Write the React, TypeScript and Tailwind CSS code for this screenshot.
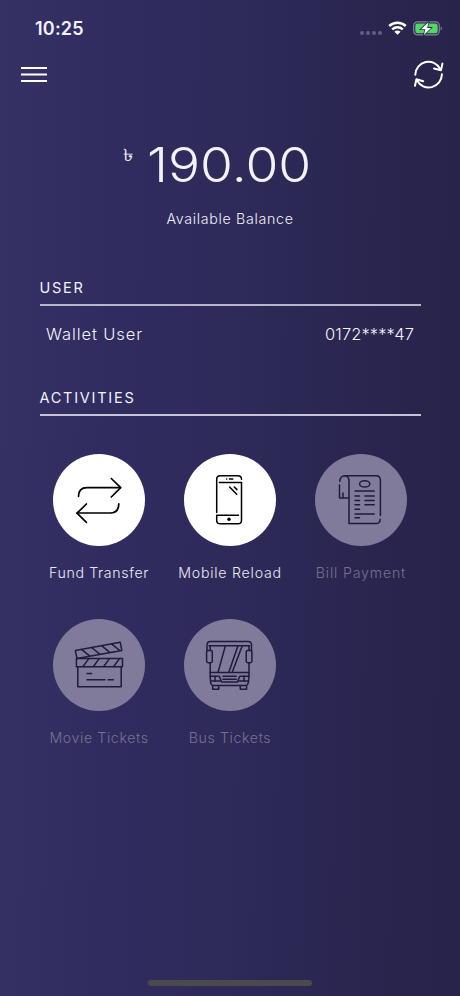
import type { ReactNode } from 'react'

interface Activity {
  label: string
  icon: ReactNode
  disabled?: boolean
  labelClass: string
}

function MenuIcon() {
  return (
    <svg className="w-[26px] h-[16px]" viewBox="0 0 26 16" stroke="white" strokeWidth={2}>
      <path d="M0 2H26M0 8.4H26M0 14.9H26" />
    </svg>
  )
}

function RefreshIcon() {
  return (
    <svg
      className="w-[30px] h-[30px]"
      viewBox="0 0 30 30"
      fill="none"
      stroke="white"
      strokeWidth={2}
      strokeLinecap="round"
      strokeLinejoin="round"
    >
      <path d="M1.3 14.7A13.2 13.2 0 0 1 26.4 9.2" />
      <path d="M27.9 14.3A13.2 13.2 0 0 1 3 20.4" />
      <path d="M20 8.5L27 10.2L28.4 3.6" />
      <path d="M1 25.8L2.4 19.2L9.2 21.2" />
    </svg>
  )
}

function WifiIcon() {
  return (
    <svg className="w-[19px] h-[14px]" viewBox="0 0 19 14" fill="none" stroke="white" strokeWidth={2.5}>
      <path d="M1.2 5C5.9 .7 13.1 .7 17.8 5" />
      <path d="M4.2 8.4C7.2 5.6 11.8 5.6 14.8 8.4" />
      <path d="M9.5 13.8L6.4 10.8C8.1 9.2 10.9 9.2 12.6 10.8Z" fill="white" stroke="none" />
    </svg>
  )
}

function BatteryIcon() {
  return (
    <svg className="w-[30px] h-[16px]" viewBox="0 0 30 16">
      <rect x="0.7" y="1.9" width="25.6" height="13" rx="3.8" fill="none" stroke="#85829c" strokeWidth={1.2} />
      <rect x="2.3" y="3.5" width="22.4" height="9.8" rx="2.2" fill="#4fd964" />
      <path d="M27.7 6.2C29.4 6.9 29.4 9.9 27.7 10.6Z" fill="#85829c" />
      <path
        d="M15.5 2.2L8 9.2H12.3L10.9 15L18 7.9H14.2Z"
        fill="white"
        stroke="#2b2756"
        strokeWidth={1.6}
        paintOrder="stroke"
      />
    </svg>
  )
}

function TransferIcon() {
  return (
    <svg className="size-[92px]" viewBox="0 0 92 92" fill="none" stroke="black" strokeWidth={1.7} strokeLinecap="round" strokeLinejoin="round">
      <path d="M25.5 42.3C25.5 36.5 29 33.6 34 33.6H67.5" />
      <path d="M58.3 24.5L67.7 33.7L58.3 43" />
      <path d="M65.8 49.8C65.8 55.6 62.6 59 57 59H24" />
      <path d="M33.4 50L24 59.2L33.4 68.3" />
    </svg>
  )
}

function PhoneIcon() {
  return (
    <svg className="size-[92px]" viewBox="0 0 92 92" fill="none" stroke="black" strokeWidth={1.5} strokeLinecap="round" strokeLinejoin="round">
      <path d="M32.7 58.5V25.3Q32.7 21.7 36.3 21.7H53.9Q57.5 21.7 57.5 25.3M57.5 28.6V66.2Q57.5 69.8 53.9 69.8H36.3Q32.7 69.8 32.7 66.2V61.3H54.5" />
      <path d="M35.3 28.5H57.5" />
      <path d="M45.5 25H48.8M42.6 25H42.7" />
      <path d="M45.6 33L52.7 40.2M50.3 33L53 35.6" />
      <circle cx="45" cy="65.2" r="1.7" fill="black" stroke="none" />
    </svg>
  )
}

function BillIcon() {
  return (
    <svg className="size-[92px]" viewBox="0 0 92 92" fill="none" stroke="#1f1b3c" strokeWidth={1.5} strokeLinecap="round" strokeLinejoin="round">
      <path d="M24.8 27.5C25 23.8 26.9 21.7 29.8 21.7H61Q65.4 21.7 65.4 26.1V61.5" />
      <path d="M29.8 21.7C32.6 21.7 34 24 34 27.5V69.6H61Q65.1 69.6 65.1 65.2" />
      <path d="M24.5 31V44H33.6M28 39V43.7" />
      <ellipse cx="49.7" cy="29.9" rx="5.1" ry="3.1" />
      <path d="M40 36.9H59.2" />
      <path d="M40 42H44.5M50 42H59.2M40 46.4H44.5M50 46.4H59.2M40 50.8H44.5M50 50.8H59.2M40 55.2H44.5" />
      <path d="M40 60H59.2M40 63.7H44.5" />
    </svg>
  )
}

function MovieIcon() {
  return (
    <svg className="size-[92px]" viewBox="0 0 92 92" fill="none" stroke="#1f1b3c" strokeWidth={1.5} strokeLinejoin="round">
      <path d="M22.3 31.4L67.2 23.2L68.8 31.4L24 39.6Z" />
      <path d="M28.5 30.4L36.8 37.1M38.5 28.5L46.8 35.2M48.5 26.7L56.8 33.4M58.5 24.8L66.8 31.5" />
      <path d="M23.4 39.6H69.5V47.7H23.4Z" />
      <path d="M29.8 47.7L35.8 39.6M40.2 47.7L46.2 39.6M50.5 47.7L56.5 39.6M60.5 47.7L66.5 39.6" />
      <path d="M24.8 47.7V67.8H68.2V47.7" />
      <path d="M33.5 54.6H39.2M33.5 60.7H52.5M54.5 60.7H60.8" />
    </svg>
  )
}

function BusIcon() {
  return (
    <svg className="size-[92px]" viewBox="0 0 92 92" fill="none" stroke="#1f1b3c" strokeWidth={1.5} strokeLinejoin="round" strokeLinecap="round">
      <path d="M23 31.5V26Q23 22.5 26.5 22.5H64Q67.5 22.5 67.5 26V31.5M25 26.8H65.5" />
      <rect x="22.6" y="31.5" width="5.7" height="12.2" rx="1.6" />
      <rect x="62.2" y="31.5" width="5.7" height="12.2" rx="1.6" />
      <path d="M26.2 27V31M26.2 44V57.5L26.6 63Q26.8 66.6 30 66.6H61Q64 66.6 64.4 63L65 57.5V44M65 27V31" />
      <path d="M26.2 53.4H65M26.2 57.2H35.4L37.5 62.9H53.5L55.7 57.2H65M26.6 62H36.8M54 62H64.5" />
      <path d="M31 57.2V62M60 57.2V62M39 57.3H52.2M39 60.2H52.2" />
      <path d="M41.2 27.4L34.2 52.8M53.7 27.4L45 52.8M58 27.4L48.4 52.8" />
      <path d="M28.7 66.8V70.2H34.7V66.8M56.3 66.8V70.2H62.6V66.8" />
    </svg>
  )
}

const activities: Activity[] = [
  { label: 'Fund Transfer', icon: <TransferIcon />, labelClass: 'tracking-[0.65px]' },
  { label: 'Mobile Reload', icon: <PhoneIcon />, labelClass: 'tracking-[0.75px]' },
  { label: 'Bill Payment', icon: <BillIcon />, labelClass: 'tracking-[0.8px]', disabled: true },
  { label: 'Movie Tickets', icon: <MovieIcon />, labelClass: 'tracking-[0.6px]', disabled: true },
  { label: 'Bus Tickets', icon: <BusIcon />, labelClass: 'tracking-[0.6px]', disabled: true },
]

function ActivityButton({ label, icon, disabled, labelClass }: Activity) {
  return (
    <button className="flex flex-col items-center h-[165px]" disabled={disabled}>
      <span className={`size-[92px] rounded-full ${disabled ? 'bg-[#807b9b]' : 'bg-white'}`}>{icon}</span>
      <span
        className={`mt-[17px] text-[14.2px] leading-5 whitespace-nowrap ${labelClass} ${
          disabled ? 'text-[#77728f]' : 'text-[#eceaf6]'
        }`}
      >
        {label}
      </span>
    </button>
  )
}

export default function App() {
  return (
    <div className="w-[460px] h-[996px] overflow-hidden flex flex-col bg-[linear-gradient(91deg,#353165_0%,#312c60_25%,#2d2957_58%,#28244c_88%,#27234a_100%)] text-[#f3f1fb] font-['Inter','Liberation_Sans',sans-serif] font-[350]">
      {/* Status bar */}
      <div className="h-[52px] pt-[18px] pl-[35px] pr-[17.5px] flex justify-between items-start">
        <span className="text-[18px] leading-[22px] font-semibold tracking-[0.2px]">10:25</span>
        <div className="flex items-start pt-[2px]">
          <div className="flex gap-[2px] pt-[11px] mr-[6px]">
            <i className="size-1 rounded-full bg-[#625e88]" />
            <i className="size-1 rounded-full bg-[#625e88]" />
            <i className="size-1 rounded-full bg-[#625e88]" />
            <i className="size-1 rounded-full bg-[#625e88]" />
          </div>
          <div className="pt-px">
            <WifiIcon />
          </div>
          <div className="ml-[6px]">
            <BatteryIcon />
          </div>
        </div>
      </div>

      {/* Toolbar */}
      <div className="h-[88px] pt-[7px] pl-[21px] pr-[16px] flex justify-between items-start">
        <button className="pt-[7px]">
          <MenuIcon />
        </button>
        <button className="pt-[0.5px]">
          <RefreshIcon />
        </button>
      </div>

      {/* Balance */}
      <div className="h-[138px] flex flex-col">
        <div className="flex items-start pl-[123px]">
          <span className="w-[24px] mt-[5px] text-[17px] leading-5 font-normal">
            <span className="inline-block origin-left scale-x-[1.25]">৳</span>
          </span>
          <span className="text-[48.5px] leading-[50px] whitespace-nowrap origin-left scale-x-[1.1] font-[340]">190.00</span>
        </div>
        <span className="mt-[19px] text-center text-[14.2px] leading-5 tracking-[0.7px]">Available Balance</span>
      </div>

      {/* User */}
      <section className="mx-[39.5px] h-[110px]">
        <h2 className="h-[28px] border-b-2 border-[#b7b4cb] text-[14.5px] leading-5 font-normal tracking-[1.7px]">USER</h2>
        <div className="px-[6.5px] pt-[16px] flex justify-between text-[16.5px] leading-6">
          <span className="tracking-[0.9px]">Wallet User</span>
          <span className="tracking-[0.1px]">0172****47</span>
        </div>
      </section>

      {/* Activities */}
      <section className="mx-[39.5px]">
        <h2 className="h-[28px] border-b-2 border-[#c6c3d8] text-[14.5px] leading-5 font-normal tracking-[1.75px]">ACTIVITIES</h2>
      </section>
      <div className="mx-[33.5px] mt-[38px] grid grid-cols-3">
        {activities.map((activity) => (
          <ActivityButton key={activity.label} {...activity} />
        ))}
      </div>

      <div className="mt-auto mb-[10px] ml-[148px] w-[164px] h-[6px] rounded-full bg-[#4a4a4c]" />
    </div>
  )
}
